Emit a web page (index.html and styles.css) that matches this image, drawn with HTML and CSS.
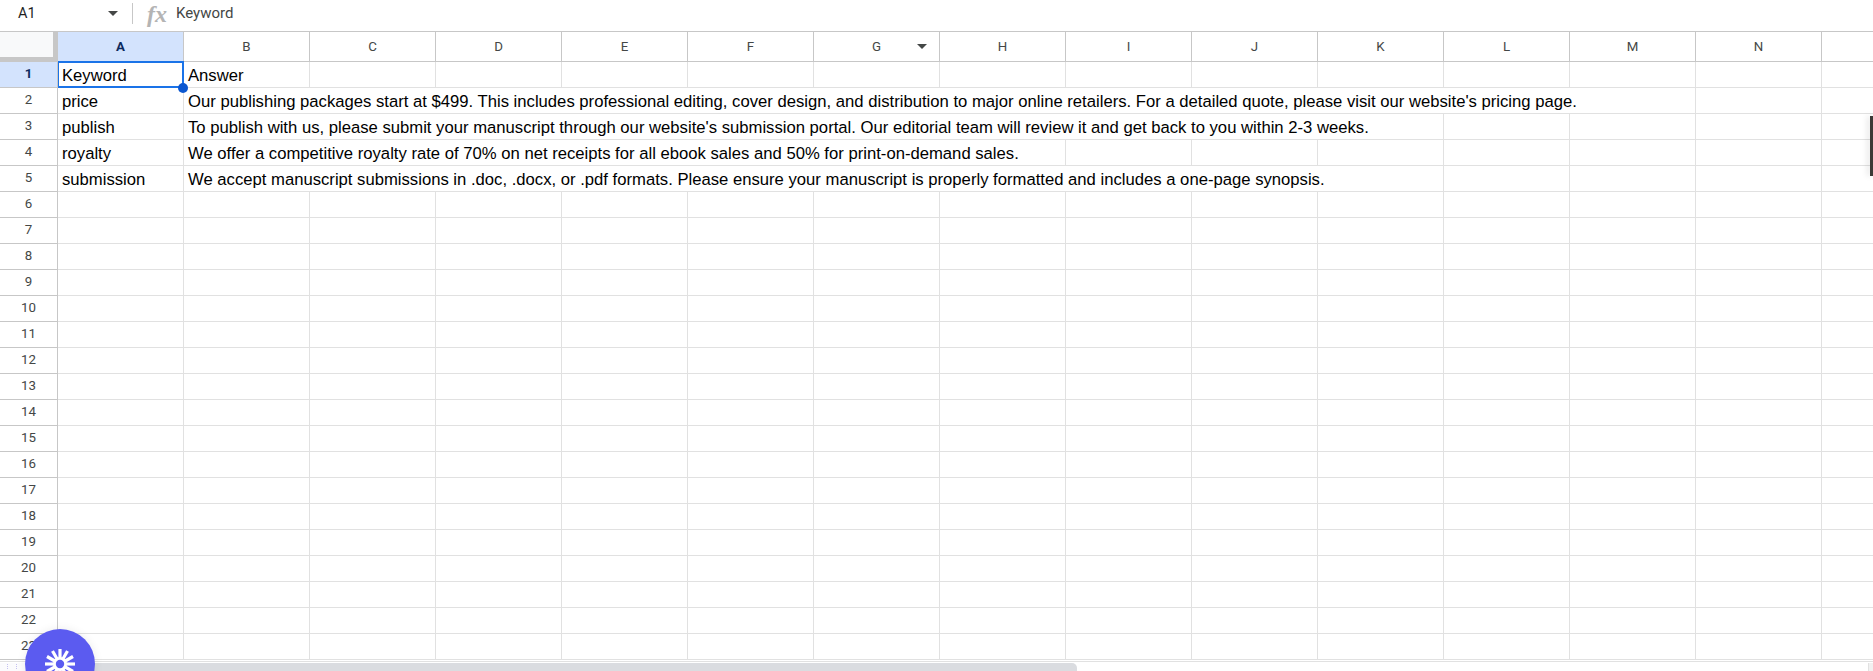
FILE: index.html
```html
<!DOCTYPE html>
<html lang="en">
<head>
    <meta charset="UTF-8">
    <title>Keyword sheet</title>
    <link rel="stylesheet" href="styles.css">
</head>
<body>
<div class="formula-bar">
    <div class="name-box">A1</div>
    <span class="caret name-caret"></span>
    <span class="bar-sep"></span>
    <span class="fx">fx</span>
    <span class="formula-text">Keyword</span>
</div>

<div class="col-heads">
    <div class="corner"></div>
    <div class="col-head current">A</div>
    <div class="col-head">B</div>
    <div class="col-head">C</div>
    <div class="col-head">D</div>
    <div class="col-head">E</div>
    <div class="col-head">F</div>
    <div class="col-head has-menu">G<span class="caret col-caret"></span></div>
    <div class="col-head">H</div>
    <div class="col-head">I</div>
    <div class="col-head">J</div>
    <div class="col-head">K</div>
    <div class="col-head">L</div>
    <div class="col-head">M</div>
    <div class="col-head">N</div>
    <div class="col-head"></div>
</div>

<div class="sheet">
    <div class="row">
        <div class="row-head current">1</div>
        <div class="cell selected">Keyword<span class="handle"></span></div>
        <div class="cell">Answer</div>
    </div>
    <div class="row">
        <div class="row-head">2</div>
        <div class="cell">price</div>
        <div class="cell span-12">Our publishing packages start at $499. This includes professional editing, cover design, and distribution to major online retailers. For a detailed quote, please visit our website's pricing page.</div>
    </div>
    <div class="row">
        <div class="row-head">3</div>
        <div class="cell">publish</div>
        <div class="cell span-10">To publish with us, please submit your manuscript through our website's submission portal. Our editorial team will review it and get back to you within 2-3 weeks.</div>
    </div>
    <div class="row">
        <div class="row-head">4</div>
        <div class="cell">royalty</div>
        <div class="cell span-7">We offer a competitive royalty rate of 70% on net receipts for all ebook sales and 50% for print-on-demand sales.</div>
    </div>
    <div class="row">
        <div class="row-head">5</div>
        <div class="cell">submission</div>
        <div class="cell span-10">We accept manuscript submissions in .doc, .docx, or .pdf formats. Please ensure your manuscript is properly formatted and includes a one-page synopsis.</div>
    </div>
    <div class="row"><div class="row-head">6</div></div>
    <div class="row"><div class="row-head">7</div></div>
    <div class="row"><div class="row-head">8</div></div>
    <div class="row"><div class="row-head">9</div></div>
    <div class="row"><div class="row-head">10</div></div>
    <div class="row"><div class="row-head">11</div></div>
    <div class="row"><div class="row-head">12</div></div>
    <div class="row"><div class="row-head">13</div></div>
    <div class="row"><div class="row-head">14</div></div>
    <div class="row"><div class="row-head">15</div></div>
    <div class="row"><div class="row-head">16</div></div>
    <div class="row"><div class="row-head">17</div></div>
    <div class="row"><div class="row-head">18</div></div>
    <div class="row"><div class="row-head">19</div></div>
    <div class="row"><div class="row-head">20</div></div>
    <div class="row"><div class="row-head">21</div></div>
    <div class="row"><div class="row-head">22</div></div>
    <div class="row"><div class="row-head">23</div></div>
</div>

<div class="h-scroll">
    <div class="h-grip"><span></span><span></span></div>
    <div class="h-thumb"></div>
    <div class="h-end"></div>
</div>

<div class="v-indicator"></div>

<div class="fab">
    <svg width="44" height="44" viewBox="0 0 44 44">
        <g stroke="#fff" stroke-width="3.2">
            <line x1="22" y1="7" x2="22" y2="37"/>
            <line x1="7" y1="22" x2="37" y2="22"/>
            <line x1="14.5" y1="9" x2="29.5" y2="35"/>
            <line x1="29.5" y1="9" x2="14.5" y2="35"/>
            <line x1="9" y1="14.5" x2="35" y2="29.5"/>
            <line x1="9" y1="29.5" x2="35" y2="14.5"/>
        </g>
        <circle cx="22" cy="22" r="7" fill="#fff"/>
        <circle cx="22" cy="22" r="4.2" fill="#5b5bf0"/>
    </svg>
</div>
</body>
</html>
```

FILE: styles.css
```css
* {
    box-sizing: border-box;
    padding: 0;
    margin: 0;
}

html,
body {
    height: 100%;
    overflow: hidden;
}

body {
    background: #fff;
    font-family: "Liberation Sans", Arial, sans-serif;
    color: #000;
}

/* formula bar */
.formula-bar {
    display: flex;
    align-items: center;
    height: 32px;
    padding-bottom: 4px;
    border-bottom: 1px solid #c7c7c7;
    font-family: Roboto, sans-serif;
    font-size: 15px;
    color: #444746;
}

.name-box {
    width: 108px;
    padding-left: 18px;
    font-size: 14.5px;
    color: #1f1f1f;
}

.caret {
    display: block;
    width: 0;
    height: 0;
    border-left: 5px solid transparent;
    border-right: 5px solid transparent;
    border-top: 5px solid #444746;
}

.bar-sep {
    width: 1px;
    height: 21px;
    margin-left: 14px;
    background: #c7c7c7;
}

.fx {
    width: 18px;
    margin-left: 14px;
    font-family: "Liberation Serif", serif;
    font-style: italic;
    font-weight: 700;
    font-size: 24px;
    line-height: 20px;
    color: #b4b4b4;
}

.formula-text {
    margin-left: 11px;
    padding-bottom: 1px;
}

/* column headers */
.col-heads,
.row {
    display: grid;
    grid-template-columns: 58px repeat(15, 126px);
}

.col-heads {
    height: 30px;
    border-bottom: 1px solid #c7c7c7;
    font-family: Roboto, sans-serif;
    font-size: 13.3px;
    color: #444746;
}

.corner {
    background: #f8f9fa;
    border-right: 5px solid #c7c7c7;
    border-bottom: 5px solid #c7c7c7;
    margin-bottom: -1px;
}

.col-head {
    position: relative;
    display: flex;
    align-items: center;
    justify-content: center;
    border-right: 1px solid #c7c7c7;
}

.col-head.current {
    background: #d3e3fd;
    color: #0b2a5e;
    font-weight: 700;
}

.col-caret {
    position: absolute;
    right: 12px;
    top: 12px;
}

/* grid */
.row {
    height: 26px;
    border-bottom: 1px solid #e1e1e1;
    background: repeating-linear-gradient(90deg, transparent 0, transparent 125px, #e1e1e1 125px, #e1e1e1 126px) 58px 0 no-repeat;
    font-size: 16.66px;
}

.row-head {
    display: flex;
    align-items: center;
    justify-content: center;
    margin-bottom: -1px;
    padding-bottom: 3px;
    border-right: 1px solid #c7c7c7;
    border-bottom: 1px solid #c7c7c7;
    background: #fff;
    font-family: Roboto, sans-serif;
    font-size: 13.3px;
    color: #444746;
}

.row-head.current {
    background: #d3e3fd;
    color: #0b2a5e;
    font-weight: 700;
}

.cell {
    position: relative;
    padding: 4px 3px 0 4px;
    background: #fff;
    border-right: 1px solid #e1e1e1;
    white-space: nowrap;
    line-height: 20px;
}

.span-7 {
    grid-column: span 7;
}

.span-10 {
    grid-column: span 10;
}

.span-12 {
    grid-column: span 12;
}

.cell.selected {
    z-index: 2;
    margin: -1px 0 -1px 0;
    padding: 3px 3px 0 3px;
    border: 2px solid #1a73e8;
    border-left-width: 1px;
}

.handle {
    position: absolute;
    right: -6px;
    bottom: -7px;
    width: 10px;
    height: 10px;
    border-radius: 50%;
    background: #0b57d0;
}

/* scrolling */
.h-scroll {
    display: flex;
    height: 10px;
    margin-top: 1px;
    padding-top: 1px;
    border-top: 1px solid #e1e1e1;
}

.h-grip {
    display: flex;
    gap: 8px;
    width: 58px;
    padding: 1px 0 0 7px;
    background: #fbfbfd;
}

.h-grip span {
    height: 5px;
    border-left: 1px dotted #c4c0f0;
}

.h-thumb {
    width: 1019px;
    background: #dadce0;
    border-radius: 0 5px 0 0;
}

.h-end {
    width: 5px;
    margin-left: auto;
    background: #f1f1f1;
    border-left: 1px solid #e1e1e1;
}

.v-indicator {
    position: fixed;
    right: 0;
    top: 116px;
    width: 3px;
    height: 60px;
    background: #3c3a37;
    box-shadow: -2px 0 6px rgba(0, 0, 0, 0.15);
}

.fab {
    position: fixed;
    left: 25px;
    top: 629px;
    display: flex;
    align-items: center;
    justify-content: center;
    width: 70px;
    height: 70px;
    border-radius: 50%;
    background: #5b5bf0;
    box-shadow: 0 0 10px rgba(0, 0, 0, 0.08);
}
```
